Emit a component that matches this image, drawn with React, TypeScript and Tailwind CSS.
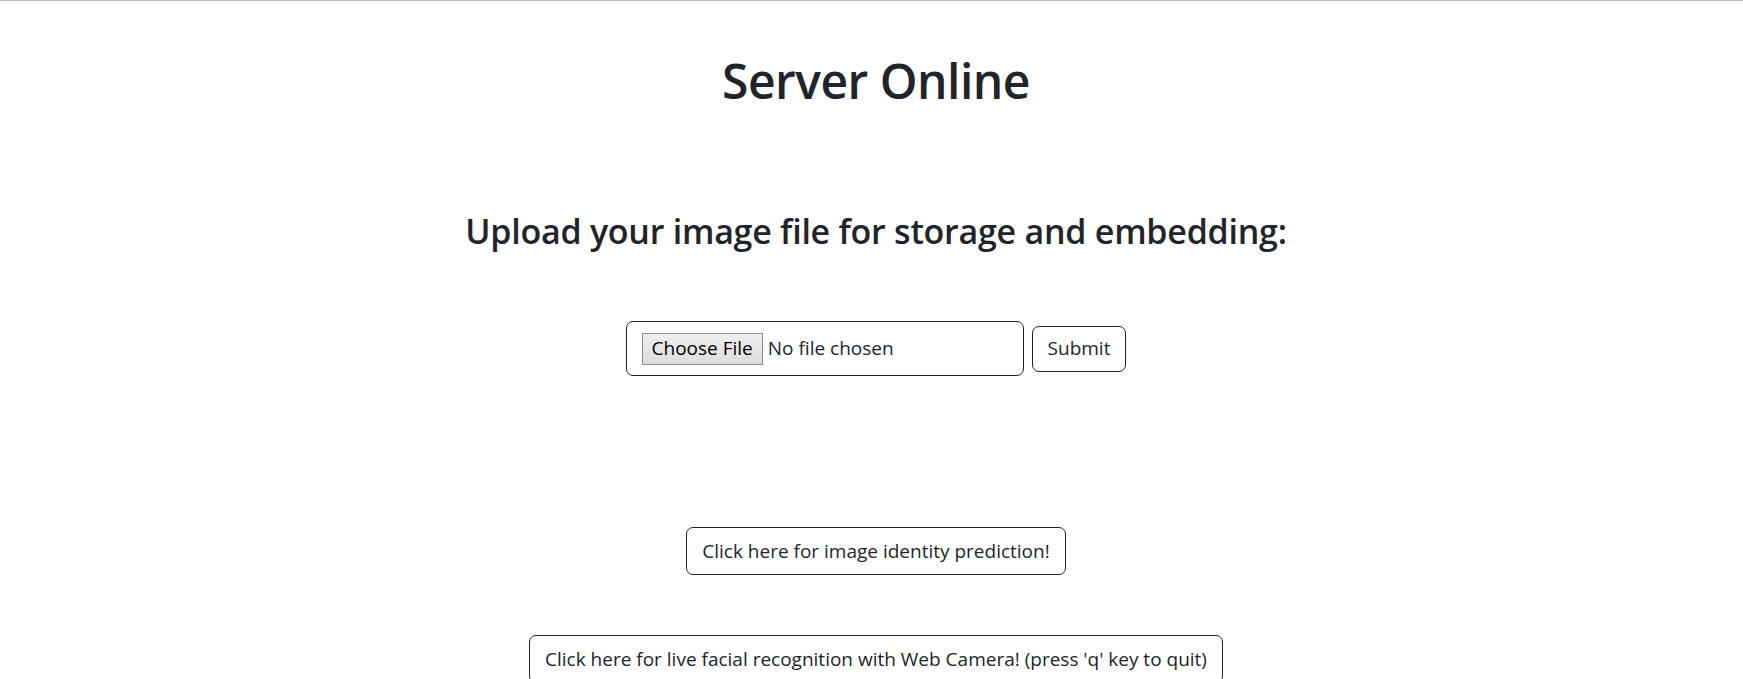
import React from 'react';

const App: React.FC = () => {
  return (
    <div className="min-h-screen bg-white text-[#212529]" style={{ fontFamily: '"Open Sans", "Noto Sans", sans-serif' }}>
      <div className="h-px bg-[#aebfca]" />
      <div className="flex flex-col items-center text-center pl-[9px]">
        <h1 className="mt-[51px] text-[48px] leading-[58px] font-semibold tracking-[-0.5px]">Server Online</h1>

        <h2 className="mt-[100px] text-[34px] leading-[42px] font-semibold tracking-[-0.25px]">
          Upload your image file for storage and embedding:
        </h2>

        <form className="mt-[69px] flex items-center gap-2" onSubmit={(e) => e.preventDefault()}>
          <div className="w-[398px] h-[55px] border border-[#212529] rounded-[7px] flex items-center pl-[15px] text-[19px]">
            <div className="h-[32px] px-[9px] flex items-center border border-[#8f8f8f] bg-gradient-to-b from-[#efefef] to-[#dddddd] text-black">
              Choose File
            </div>
            <span className="ml-[5px] text-[#212529]">No file chosen</span>
          </div>
          <button type="submit" className="h-[46px] px-[15px] border border-[#212529] rounded-[7px] text-[19px] text-[#212529]">
            Submit
          </button>
        </form>

        <button className="mt-[151px] h-[48px] px-[15px] border border-[#212529] rounded-[7px] text-[19px] text-[#212529]">
          Click here for image identity prediction!
        </button>

        <button className="mt-[60px] h-[48px] px-[15px] border border-[#212529] rounded-[7px] text-[19px] text-[#212529]">
          Click here for live facial recognition with Web Camera! (press 'q' key to quit)
        </button>
      </div>
    </div>
  );
};

export default App;
